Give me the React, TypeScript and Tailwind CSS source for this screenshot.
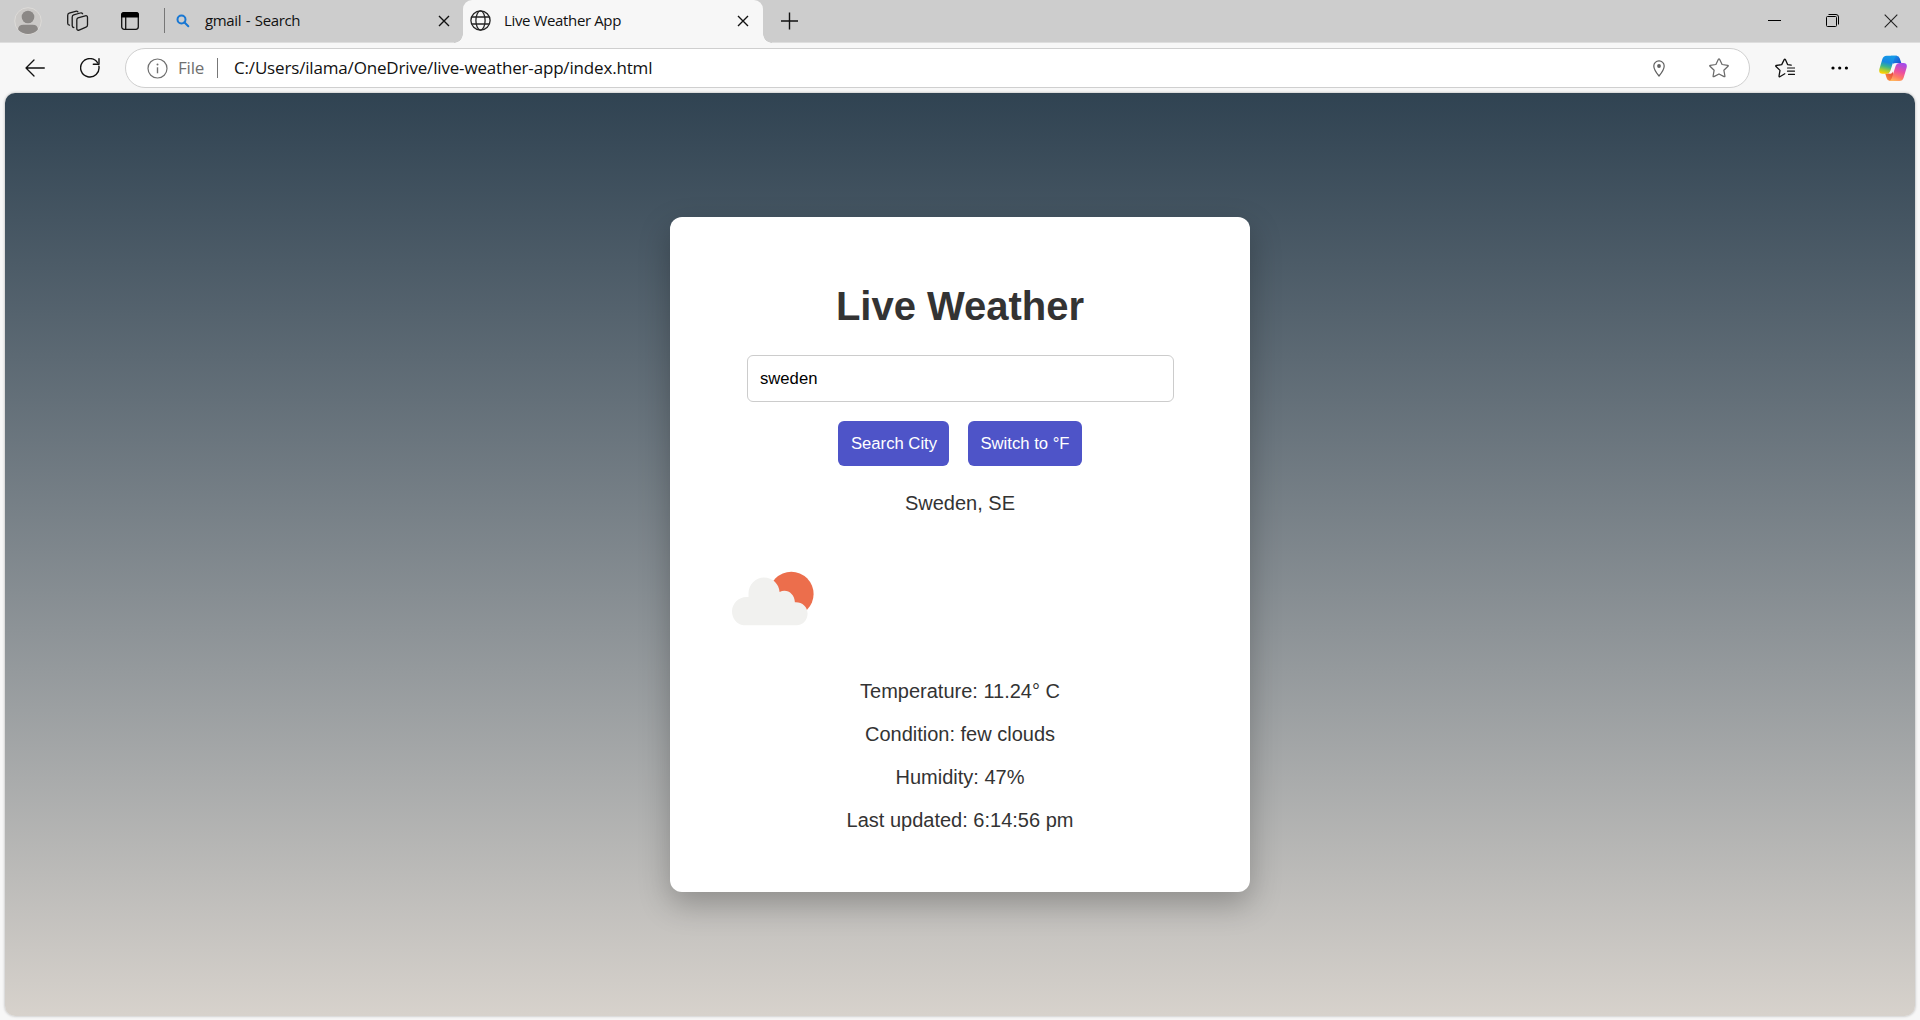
import React from "react";

const CloseIcon = () => (
  <svg width="12" height="12" viewBox="0 0 12 12" fill="none" stroke="#111" strokeWidth="1.4">
    <path d="M1 1l10 10M11 1L1 11" />
  </svg>
);

const Avatar = () => (
  <svg width="28" height="28" viewBox="0 0 28 28">
    <defs>
      <clipPath id="avatar">
        <circle cx="14" cy="14" r="13" />
      </clipPath>
    </defs>
    <circle cx="14" cy="14" r="13.3" fill="#cbc9c7" stroke="#dddbd8" strokeWidth="1" />
    <g clipPath="url(#avatar)" fill="#8b8886">
      <circle cx="14" cy="10" r="6.3" />
      <path d="M4 27v-4q0-5.2 5.500-5.200h9q5.500 0 5.500 5.200v4z" />
    </g>
  </svg>
);

const WorkspacesIcon = () => (
  <svg width="22" height="22" viewBox="0 0 22 22" fill="none" stroke="#1b1b1b" strokeWidth="1.3" strokeLinejoin="round" strokeLinecap="round">
    <path d="M11 7.900l7.200-2.100q2.300-.6 2.300 1.700v7.600q0 1.500-1.500 2.100l-6.900 2.900q-2.300.7-2.300-1.500v-8.500q0-1.700 1.200-2.200z" />
    <path d="M6.800 17.500q-1.600 0-1.600-1.700V7.200q0-1.800 1.500-2.300l6.500-1.900q1.700-.5 2.400.8" />
    <path d="M2.500 15.200q-1.800-.1-1.800-1.900V5.500q0-1.800 1.500-2.300L8.500 1.300q1.700-.4 2.400.6" />
  </svg>
);

const TabActionsIcon = () => (
  <svg width="18" height="18" viewBox="0 0 18 18" fill="none" stroke="#111" strokeWidth="1.3">
    <rect x=".7" y=".7" width="16.600" height="16.600" rx="2.500" />
    <path d="M0 5.500V3q0-3 3-3h12q3 0 3 3v2.500z" fill="#000" stroke="none" />
    <path d="M4.700 5v12" />
  </svg>
);

const SearchIcon = () => (
  <svg width="14" height="14" viewBox="0 0 14 14" fill="none" stroke="#1877d3" strokeWidth="2">
    <circle cx="5.500" cy="5.500" r="4" />
    <path d="M8.300 8.300l4 4" strokeLinecap="round" />
  </svg>
);

const GlobeIcon = () => (
  <svg width="21" height="21" viewBox="0 0 21 21" fill="none" stroke="#242424" strokeWidth="1.3">
    <circle cx="10.500" cy="10.500" r="9.600" />
    <ellipse cx="10.500" cy="10.500" rx="4.600" ry="9.600" />
    <path d="M1.800 7h17.400M1.800 14h17.400" />
  </svg>
);

const BackIcon = () => (
  <svg width="20" height="18" viewBox="0 0 20 18" fill="none" stroke="#111" strokeWidth="1.300" strokeLinecap="round" strokeLinejoin="round">
    <path d="M19.300 9H1M9 1L1 9l8 8" />
  </svg>
);

const RefreshIcon = () => (
  <svg width="20" height="20" viewBox="0 0 20 20" fill="none" stroke="#111" strokeWidth="1.400" strokeLinecap="round" strokeLinejoin="round">
    <path d="M18.900 8.200A9.200 9.200 0 1 1 17.700 5" />
    <path d="M19 .8v5.400h-5.700" />
  </svg>
);

const InfoIcon = () => (
  <svg width="21" height="21" viewBox="0 0 21 21" fill="none" stroke="#707070" strokeWidth="1.200">
    <circle cx="10.500" cy="10.500" r="9.500" />
    <path d="M10.500 9.300v6" strokeWidth="1.400" />
    <circle cx="10.500" cy="6.400" r="1" fill="#707070" stroke="none" />
  </svg>
);

const PinIcon = () => (
  <svg width="12" height="17" viewBox="0 0 12 17" fill="none" stroke="#606060" strokeWidth="1.200" strokeLinejoin="round">
    <path d="M6 16C3.500 13 .8 9.300 .8 6a5.200 5.200 0 0 1 10.400 0C11.200 9.300 8.500 13 6 16z" />
    <circle cx="6" cy="6" r="1.900" fill="#606060" stroke="none" />
  </svg>
);

const StarIcon = () => (
  <svg width="20" height="20" viewBox="0 0 20 20" fill="none" stroke="#6a6a6a" strokeWidth="1.250" strokeLinejoin="round">
    <path d="M9.400 1.300q.6-1 1.200 0l2.500 5.200 5.600.8q1 .2.300 1l-4.100 4 1 5.700q.1 1-.8.600L10 16l-5.100 2.600q-.9.400-.8-.6l1-5.700-4.100-4q-.7-.8.300-1l5.600-.8z" />
  </svg>
);

const FavoritesIcon = () => (
  <svg width="20" height="20" viewBox="0 0 20 20" fill="none" stroke="#111" strokeWidth="1.300" strokeLinejoin="round" strokeLinecap="round">
    <path d="M16.200 7.100l-3.600-.5-2.200-5q-.6-1-1.200 0L6.700 6.600l-5.400.9q-1 .2-.3 1l4 3.900-1 5.700q0 1 .8.600l5-2.900" />
    <path d="M12.500 10h7M12.500 13.200h7M13.500 16.400h6" strokeWidth="1.200" />
  </svg>
);

const CopilotIcon = () => (
  <svg width="28" height="27" viewBox="0 0 28 27">
    <defs>
      <linearGradient id="cpA" x1=".6" y1="0" x2=".35" y2="1">
        <stop offset="0" stopColor="#159be8" />
        <stop offset=".38" stopColor="#1787e2" />
        <stop offset=".62" stopColor="#3bb58b" />
        <stop offset=".82" stopColor="#a5cb38" />
        <stop offset="1" stopColor="#ffd000" />
      </linearGradient>
      <linearGradient id="cpB" x1=".65" y1="0" x2=".3" y2="1">
        <stop offset="0" stopColor="#a34bea" />
        <stop offset=".45" stopColor="#ed4f9e" />
        <stop offset=".75" stopColor="#ff7b65" />
        <stop offset="1" stopColor="#ffb55c" />
      </linearGradient>
      <linearGradient id="cpC" x1="0" y1="0" x2="1" y2="1">
        <stop offset="0" stopColor="#1aa0f0" />
        <stop offset="1" stopColor="#1841c6" />
      </linearGradient>
      <linearGradient id="cpD" x1="0" y1="1" x2="1" y2="0">
        <stop offset="0" stopColor="#ff9b41" />
        <stop offset="1" stopColor="#dc3038" />
      </linearGradient>
    </defs>
    <path d="M12 .7h5.500q2.500 0 3.300 2.800l1.500 4.500h-4.300q-2.600 0-3.200 3z" fill="url(#cpC)" />
    <path d="M16 26h-5q-2.500 0-3.300-2.800L6.200 18.600h4q2.600 0 3.200-3z" fill="url(#cpD)" />
    <path d="M7.600.7H18q-1.900.5-2.700 2.800l-4 12.500q-.9 2.700-3.500 2.700H3.500q-4.200 0-3.100-4.700L3.300 4.200Q4.300.7 7.600.7z" fill="url(#cpA)" />
    <path d="M20.400 26H10q1.900-.5 2.700-2.800l4-12.500q.9-2.700 3.500-2.700h4.300q4.200 0 3.100 4.700l-2.900 9.800q-1 3.500-4.300 3.500z" fill="url(#cpB)" />
    <path d="M14.800 8.200h3q-1.500.7-2.100 2.500l-2 6.300q-.6 1.700-2.300 1.700H9.800q1.400-.7 2-2.500l2-6.300q.3-1 1-1.700z" fill="#fbf7f7" />
  </svg>
);

const FewCloudsIcon = () => (
  <svg width="125" height="125" viewBox="0 0 125 125" className="block">
    <circle cx="71.300" cy="54" r="22.300" fill="#ec6e4c" />
    <path
      d="M23.500 85.200C17 84.500 12 78.500 12 71.500c0-8 6.500-14.300 14.500-14.500h2V53.500c0-9 7-16 15.500-16 8.700 0 15 6.500 15.600 14.500 7.200-3.700 14.900 1.500 15.300 10.200 7-.5 12.700 4.500 12.700 11.200 0 6.500-4.600 11.500-11 11.800z"
      fill="#f1f1ef"
    />
  </svg>
);

const TabStrip = () => (
  <header className="flex h-[43px] shrink-0 border-b border-[#dedede] bg-[#cdcdcd]">
    <div className="flex w-[463px] items-center pb-px pl-[14px]">
      <Avatar />
      <div className="ml-[25px]"><WorkspacesIcon /></div>
      <div className="ml-[32px]"><TabActionsIcon /></div>
      <div className="ml-[25px] h-[25px] w-px bg-[#777]" />
      <div className="ml-[11px]"><SearchIcon /></div>
      <span className="ml-[15px] w-[233px] whitespace-nowrap text-[15px] tracking-[-0.35px] [word-spacing:1px]">gmail - Search</span>
      <div className="mt-px"><CloseIcon /></div>
    </div>
    <div className="relative -mb-px flex h-[43px] w-[300px] items-center rounded-t-[9px] bg-[#f7f7f7] pb-[2px] pl-[7px]">
      <div className="absolute bottom-0 -left-[9px] h-[9px] w-[9px] bg-[radial-gradient(circle_at_0_0,#cdcdcd_8.5px,#f7f7f7_9px)]" />
      <div className="absolute -right-[9px] bottom-0 h-[9px] w-[9px] bg-[radial-gradient(circle_at_100%_0,#cdcdcd_8.5px,#f7f7f7_9px)]" />
      <GlobeIcon />
      <span className="ml-[13px] w-[233px] whitespace-nowrap text-[15px] tracking-[-0.37px]">Live Weather App</span>
      <div className="mt-px"><CloseIcon /></div>
    </div>
    <div className="flex flex-1 items-center justify-between pb-px pl-[17px] pr-[22px]">
      <svg width="18" height="18" viewBox="0 0 18 18" stroke="#111" strokeWidth="1.400">
        <path d="M9.500 .5v17M1 9h17" />
      </svg>
      <div className="flex items-center gap-[45px]">
        <svg width="13" height="13" viewBox="0 0 13 13" stroke="#000">
          <path d="M0 6.500h13" />
        </svg>
        <svg width="13" height="13" viewBox="0 0 13 13" fill="none" stroke="#000">
          <rect x=".5" y="2.500" width="10" height="10" rx="1" />
          <path d="M2.500.5h7.500q2.500 0 2.500 2.500v7.500" />
        </svg>
        <svg width="14" height="14" viewBox="0 0 14 14" stroke="#222" strokeWidth="1.100">
          <path d="M.7.7l12.600 12.600M13.300.7L.7 13.300" />
        </svg>
      </div>
    </div>
  </header>
);

const Toolbar = () => (
  <div className="flex h-[50px] shrink-0 items-center pl-[25px] pr-[13px]">
    <BackIcon />
    <div className="ml-[35px]"><RefreshIcon /></div>
    <div className="ml-[25px] flex h-[40px] w-[1625px] items-center rounded-full border border-[#cfcfcf] bg-white pl-[21px] pr-[20px]">
      <InfoIcon />
      <span className="ml-[10px] w-[39px] text-[17px] tracking-[-0.2px] text-[#707070]">File</span>
      <div className="h-[20px] w-px bg-[#777]" />
      <span className="ml-[16px] flex-1 whitespace-nowrap text-[17px] tracking-[-0.17px]">C:/Users/ilama/OneDrive/live-weather-app/index.html</span>
      <PinIcon />
      <div className="ml-[44px]"><StarIcon /></div>
    </div>
    <div className="ml-[25px]"><FavoritesIcon /></div>
    <svg width="18" height="4" viewBox="0 0 18 4" className="ml-[36px]">
      <circle cx="2" cy="2" r="1.600" />
      <circle cx="8.700" cy="2" r="1.600" />
      <circle cx="15.400" cy="2" r="1.600" />
    </svg>
    <div className="ml-[30px]"><CopilotIcon /></div>
  </div>
);

const details = ["Temperature: 11.24° C", "Condition: few clouds", "Humidity: 47%", "Last updated: 6:14:56 pm"];

const WeatherCard = () => (
  <section className="flex h-[675px] w-[580px] flex-col items-center rounded-[12px] bg-white pt-[66px] font-['Liberation_Sans',Arial,sans-serif] text-[#333] shadow-[0_12px_31px_rgba(0,0,0,0.25)]">
    <h1 className="text-[40px] leading-[46px] font-bold">Live Weather</h1>
    <input
      defaultValue="sweden"
      className="mt-[26px] h-[47px] w-[427px] rounded-[6px] border border-[#ccc] px-[12.500px] text-[16.670px] text-black outline-none"
    />
    <div className="mt-[19px] flex h-[45px] gap-[19px] text-[16.670px] text-white">
      <button className="w-[111px] whitespace-nowrap rounded-[6px] bg-[#4e54c8] pl-px">Search City</button>
      <button className="w-[114px] whitespace-nowrap rounded-[6px] bg-[#4e54c8]">Switch to °F</button>
    </div>
    <p className="mt-[26px] text-[20px] leading-[23px]">Sweden, SE</p>
    <div className="mt-[25px] w-[480px]"><FewCloudsIcon /></div>
    <div className="mt-[15px] flex flex-col items-center gap-[20px] text-[20px] leading-[23px]">
      {details.map((line) => (
        <p key={line}>{line}</p>
      ))}
    </div>
  </section>
);

export default function App() {
  return (
    <div className="flex h-[1020px] w-[1920px] flex-col overflow-hidden bg-[#f7f7f7] font-['Open_Sans','Noto_Sans',sans-serif] text-[#111]">
      <TabStrip />
      <Toolbar />
      <main className="mx-[5px] mb-[4px] flex flex-1 items-center justify-center rounded-[10px] bg-linear-to-b from-[#304352] to-[#d7d2cc] shadow-[0_0_3px_rgba(0,0,0,0.3)]">
        <WeatherCard />
      </main>
    </div>
  );
}
